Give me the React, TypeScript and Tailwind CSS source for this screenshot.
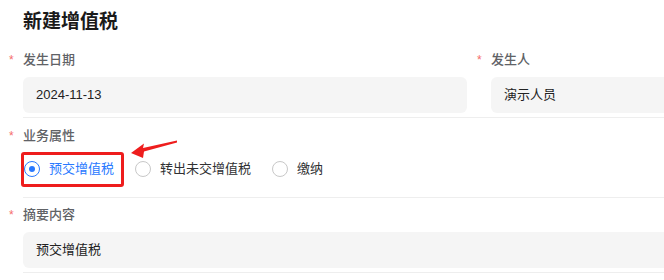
import React from "react";

const font = { fontFamily: '"Liberation Sans", "Noto Sans CJK SC", sans-serif' };

function Label({ text }: { text: string }) {
  return (
    <div className="flex items-center h-[18px] text-[13px] leading-[18px] text-[#606266] font-medium">
      <span className="ml-[-14px] w-[14px] text-[#f56c6c] text-[12px] leading-[18px]">*</span>
      <span>{text}</span>
    </div>
  );
}

function Input({ value }: { value: string }) {
  return (
    <div className="mt-[8px] h-[36px] rounded-[6px] bg-[#f5f5f5] pl-[13px] flex items-center text-[13px] text-[#222222]">
      {value}
    </div>
  );
}

function Radio({ checked, text }: { checked?: boolean; text: string }) {
  return (
    <div className="flex items-center">
      <span
        className={
          checked
            ? "w-[16px] h-[16px] rounded-full border border-[#2979ff] flex items-center justify-center"
            : "w-[16px] h-[16px] rounded-full border border-[#c8c8c8]"
        }
      >
        {checked ? <span className="w-[6px] h-[6px] rounded-full bg-[#2979ff]" /> : null}
      </span>
      <span className={checked ? "ml-[9px] text-[13px] text-[#2979ff]" : "ml-[9px] text-[13px] text-[#303133]"}>{text}</span>
    </div>
  );
}

export default function App() {
  return (
    <div className="relative w-[664px] h-[280px] overflow-hidden bg-white" style={font}>
      <div className="pl-[23px] w-[1000px]">
        <div className="pt-[8px] h-[36px] text-[19px] leading-[28px] font-bold text-[#1a1a1a]">新建增值税</div>

        <div className="pt-[15px] pb-[4px] border-b border-[#eeeeee] flex gap-[24px]">
          <div className="w-[444px]">
            <Label text="发生日期" />
            <Input value="2024-11-13" />
          </div>
          <div className="w-[444px]">
            <Label text="发生人" />
            <Input value="演示人员" />
          </div>
        </div>

        <div className="pt-[9px] pb-[10px] border-b border-[#eeeeee]">
          <Label text="业务属性" />
          <div className="relative mt-[6px] h-[36px] pl-[1px] flex items-center gap-[21px]">
            <Radio checked text="预交增值税" />
            <Radio text="转出未交增值税" />
            <Radio text="缴纳" />
            <div className="absolute left-[-2px] top-[1px] w-[103px] h-[35px] border-[3px] border-[#ee1d1d] rounded-[3px]" />
          </div>
        </div>

        <div className="pt-[8px] pb-[4px] border-b border-[#eeeeee]">
          <Label text="摘要内容" />
          <Input value="预交增值税" />
        </div>
      </div>

      <svg className="absolute left-0 top-0" width="664" height="280" viewBox="0 0 664 280">
        <polygon
          points="131,153 144,143.5 143,148 177,140.5 177,142.5 144,151.5 143,158"
          fill="#ee1d1d"
        />
      </svg>
    </div>
  );
}
